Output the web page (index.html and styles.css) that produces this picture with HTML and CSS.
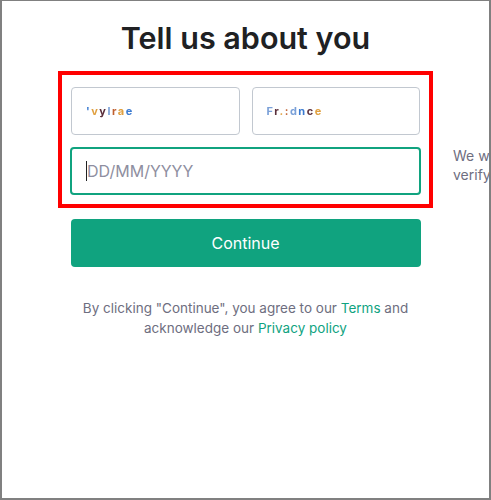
FILE: index.html
```html
<!DOCTYPE html>
<html>

<head>
    <title>Tell us about you</title>
    <link rel="stylesheet" href="styles.css">
</head>

<body>
    <div class="frame">
        <h1 class="title">Tell us about you</h1>

        <div class="highlight">
            <div class="name-row">
                <div class="field">
                    <span class="scribble">
                        <span class="c1">'</span><span class="c2">v</span><span class="c3">y</span><span class="c4">l</span><span class="c5">r</span><span class="c2">a</span><span class="c1">e</span>
                    </span>
                </div>
                <div class="field">
                    <span class="scribble">
                        <span class="c4">F</span><span class="c3">r</span><span class="c2">.</span><span class="c5">:</span><span class="c4">d</span><span class="c1">n</span><span class="c3">c</span><span class="c2">e</span>
                    </span>
                </div>
            </div>
            <div class="field field-active">
                <span class="caret"></span><span class="placeholder">DD/MM/YYYY</span>
            </div>
            <p class="hint">We will use this to<br>verify your age</p>
        </div>

        <button class="continue">Continue</button>

        <p class="terms">
            By clicking "Continue", you agree to our <a href="#">Terms</a> and<br>
            acknowledge our <a href="#">Privacy policy</a>
        </p>
    </div>
</body>

</html>
```

FILE: styles.css
```css
body {
    margin: 0;
    font-family: Inter, "Noto Sans", sans-serif;
    background-color: #ffffff;
}

.frame {
    box-sizing: border-box;
    width: 491px;
    height: 500px;
    border: 2px solid #808080;
    border-top-width: 1px;
    overflow: hidden;
    display: flex;
    flex-direction: column;
    align-items: center;
}

.title {
    margin: 17px 0 13px;
    font-size: 30.5px;
    font-weight: 600;
    color: #202123;
    line-height: 40px;
}

.highlight {
    position: relative;
    box-sizing: border-box;
    width: 375px;
    border: 4px solid #ff0000;
    padding: 12px 8px 9px 8px;
    display: flex;
    flex-direction: column;
    gap: 12px;
}

.name-row {
    display: flex;
    gap: 12px;
    padding: 0 1px;
}

.field {
    box-sizing: border-box;
    flex: 1;
    height: 48px;
    border: 1px solid #c2c8d0;
    border-radius: 4px;
    display: flex;
    align-items: center;
    padding-left: 14px;
}

.field-active {
    flex: none;
    border: 2px solid #10a37f;
    padding-left: 14px;
}

.scribble {
    font-size: 11px;
    font-weight: 700;
    letter-spacing: 1.5px;
    filter: blur(0.7px);
}

.c1 { color: #3b7bd1; }
.c2 { color: #e0a040; }
.c3 { color: #5a2e3a; }
.c4 { color: #7aa0d8; }
.c5 { color: #c06030; }

.caret {
    width: 1px;
    height: 20px;
    background-color: #202123;
}

.placeholder {
    font-size: 16px;
    color: #8e8ea0;
}

.hint {
    position: absolute;
    left: 391px;
    top: 71px;
    margin: 0;
    width: 160px;
    font-size: 14px;
    line-height: 19px;
    color: #6e6e80;
}

.continue {
    margin-top: 11px;
    width: 350px;
    height: 48px;
    border: none;
    border-radius: 4px;
    background-color: #10a37f;
    color: #ffffff;
    font-family: Inter, "Noto Sans", sans-serif;
    font-size: 16px;
}

.terms {
    margin: 31px 0 0;
    text-align: center;
    font-size: 13.5px;
    line-height: 20px;
    color: #6e6e80;
}

.terms a {
    color: #10a37f;
    text-decoration: none;
}
```
